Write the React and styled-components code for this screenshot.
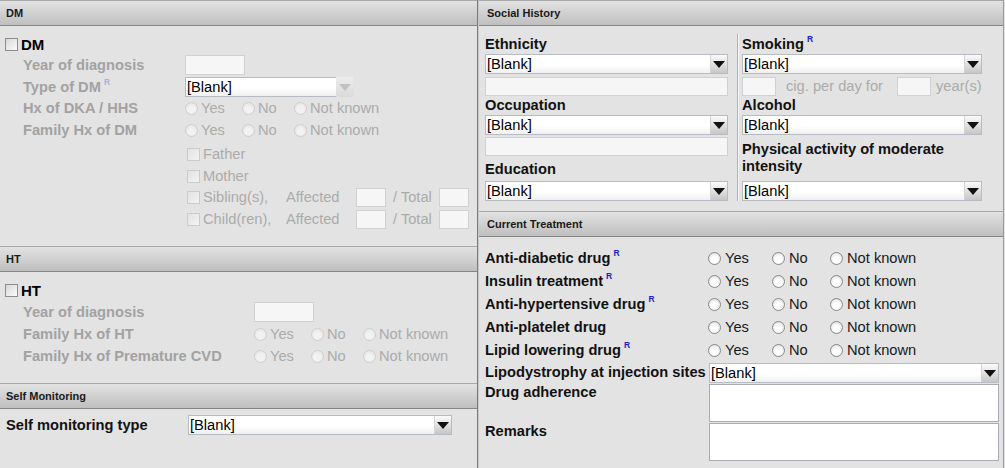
import React from "react";
import styled, { createGlobalStyle, css } from "styled-components";

const GlobalStyle = createGlobalStyle`
  html, body { margin: 0; padding: 0; background: #e3e3e3; }
  body { font-family: "Liberation Sans", Arial, sans-serif; font-size: 14.67px; color: #111; }
  * { box-sizing: border-box; }
`;

const Page = styled.div`
  display: flex;
  width: 1005px;
  height: 468px;
  overflow: hidden;
  background: #e3e3e3;
`;

const LeftCol = styled.div`
  width: 478px;
  flex: none;
  display: flex;
  flex-direction: column;
  border-right: 1px solid #7a7a7a;
`;

const RightCol = styled.div`
  flex: 1;
  display: flex;
  flex-direction: column;
  border-left: 1px solid #c9c9c9;
  border-right: 1px solid #9a9a9a;
  margin-right: 1px;
`;

const SectionHeader = styled.div`
  height: 26px;
  flex: none;
  display: flex;
  align-items: center;
  padding-left: ${(p) => p.$pad || 6}px;
  font-size: 11px;
  font-weight: bold;
  color: #1a1a1a;
  background: linear-gradient(#e2e2e2, #bfbfbf);
  border-top: 1px solid #a8a8a8;
  border-bottom: 1px solid #868686;
`;

const SectionBody = styled.div`
  padding: ${(p) => p.$pt || 0}px ${(p) => p.$pr || 0}px ${(p) => p.$pb || 0}px ${(p) => p.$pl || 0}px;
  display: flex;
  flex-direction: column;
  flex: ${(p) => (p.$grow ? 1 : "none")};
`;

const FieldRow = styled.div`
  display: grid;
  grid-template-columns: ${(p) => p.$label}px 1fr;
  align-items: ${(p) => p.$align || "center"};
  height: ${(p) => p.$h || 22}px;
  padding-left: ${(p) => p.$indent || 0}px;
  margin-top: ${(p) => p.$mt || 0}px;
`;

const Label = styled.span`
  font-weight: bold;
  white-space: nowrap;
  color: ${(p) => (p.$disabled ? "#a2a2a2" : "#111")};
  line-height: 17px;
`;

const Sup = styled.sup`
  font-size: 8.5px;
  font-weight: bold;
  line-height: 0;
  margin-left: 3px;
  vertical-align: 7px;
  color: ${(p) => (p.$disabled ? "#aab0d8" : "#1c1ccc")};
`;

const CheckRow = styled.div`
  display: flex;
  align-items: center;
  gap: 3px;
  height: ${(p) => p.$h || 20}px;
  padding-left: 5px;
`;

const CheckBox = styled.span`
  width: 13px;
  height: 13px;
  flex: none;
  border: 1px solid ${(p) => (p.$disabled ? "#cbcbcb" : "#8e8e8e")};
  background: ${(p) =>
    p.$disabled ? "linear-gradient(135deg, #e2e2e2, #f3f3f3)" : "linear-gradient(135deg, #d6d6d6, #fdfdfd)"};
`;

const BigCheckLabel = styled.span`
  font-weight: bold;
  font-size: 15px;
  color: #000;
`;

const OptText = styled.span`
  color: ${(p) => (p.$disabled ? "#ababab" : "#1a1a1a")};
  white-space: nowrap;
  line-height: 17px;
`;

const CheckOption = styled.span`
  display: inline-flex;
  align-items: center;
  gap: 3px;
  width: ${(p) => (p.$w ? `${p.$w}px` : "auto")};
  flex: none;
  margin-left: ${(p) => p.$ml || 0}px;
`;

const Options = styled.div`
  display: flex;
  align-items: center;
`;

const RadioCircle = styled.span`
  width: 13px;
  height: 13px;
  flex: none;
  border-radius: 50%;
  border: 1px solid ${(p) => (p.$disabled ? "#cfcfcf" : "#8a8a8a")};
  background: ${(p) =>
    p.$disabled
      ? "radial-gradient(circle at 50% 60%, #f2f2f2 35%, #e0e0e0 100%)"
      : "radial-gradient(circle at 50% 60%, #ffffff 35%, #d2d2d2 100%)"};
`;

const RadioOption = styled.span`
  display: inline-flex;
  align-items: center;
  gap: ${(p) => (p.$disabled ? 3 : 4)}px;
  width: ${(p) => (p.$w ? `${p.$w}px` : "auto")};
  flex: none;
`;

const SelectBox = styled.div`
  display: flex;
  width: ${(p) => p.$w}px;
  height: 20px;
  flex: none;
  border: 1px solid #b7bcc3;
  background: linear-gradient(#ffffff 55%, #f0f0f0);
`;

const SelectText = styled.span`
  flex: 1;
  padding-left: 1px;
  line-height: 18px;
  color: #000;
  white-space: nowrap;
  overflow: hidden;
`;

const SelectArrow = styled.span`
  width: 17px;
  flex: none;
  display: flex;
  align-items: center;
  justify-content: center;
  background: ${(p) =>
    p.$disabled ? "linear-gradient(#ececec, #dadada)" : "linear-gradient(#fbfbfb, #c6c6c6)"};
  border-left: 1px solid ${(p) => (p.$disabled ? "#e4e4e4" : "#d4d4d4")};
  ${(p) =>
    p.$disabled &&
    css`
      margin: -1px -1px -1px 0;
      border-left: none;
    `}
  &::after {
    content: "";
    border-left: 6px solid transparent;
    border-right: 6px solid transparent;
    border-top: 7px solid ${(p) => (p.$disabled ? "#c2c2c2" : "#111")};
    margin-top: 1px;
  }
`;

const TextBox = styled.div`
  width: ${(p) => (p.$w ? `${p.$w}px` : "100%")};
  height: ${(p) => p.$h || 20}px;
  flex: none;
  margin-top: ${(p) => p.$mt || 0}px;
  margin-left: ${(p) => p.$ml || 0}px;
  border: 1px solid ${(p) => (p.$dim ? "#cfd1d4" : "#a9adb3")};
  background: ${(p) => (p.$dim ? "#f6f6f6" : "#ffffff")};
`;

const SocialGrid = styled.div`
  display: grid;
  grid-template-columns: 243px 1fr;
  column-gap: 9px;
  padding: 8px 0 10px 6px;
`;

const SubCol = styled.div`
  display: flex;
  flex-direction: column;
  ${(p) =>
    p.$divided &&
    css`
      border-left: 1px solid #a6b4c9;
      box-shadow: inset 1px 0 0 #f4f6fa;
      padding-left: 4px;
      width: 249px;
    `}
`;

const StackLabel = styled.div`
  font-weight: bold;
  color: #111;
  height: ${(p) => p.$h}px;
  line-height: ${(p) => p.$lh || 17}px;
  padding-top: ${(p) => p.$pt || 0}px;
  flex: none;
`;

const InlineRow = styled.div`
  display: flex;
  align-items: center;
  height: 19px;
  margin-top: 3px;
  flex: none;
`;

const Select = ({ w, disabled }) => (
  <SelectBox $w={w}>
    <SelectText>[Blank]</SelectText>
    <SelectArrow $disabled={disabled} />
  </SelectBox>
);

const RadioSet = ({ disabled, widths }) => (
  <Options>
    <RadioOption $w={widths[0]} $disabled={disabled}>
      <RadioCircle $disabled={disabled} />
      <OptText $disabled={disabled}>Yes</OptText>
    </RadioOption>
    <RadioOption $w={widths[1]} $disabled={disabled}>
      <RadioCircle $disabled={disabled} />
      <OptText $disabled={disabled}>No</OptText>
    </RadioOption>
    <RadioOption $disabled={disabled}>
      <RadioCircle $disabled={disabled} />
      <OptText $disabled={disabled}>Not known</OptText>
    </RadioOption>
  </Options>
);

const treatments = [
  { label: "Anti-diabetic drug", r: true },
  { label: "Insulin treatment", r: true },
  { label: "Anti-hypertensive drug", r: true },
  { label: "Anti-platelet drug", r: false },
  { label: "Lipid lowering drug", r: true },
];

const LEFT_RADIO = [57, 52];
const RIGHT_RADIO = [64, 58];

export default function App() {
  return (
    <>
      <GlobalStyle />
      <Page>
        <LeftCol>
          <SectionHeader>DM</SectionHeader>
          <SectionBody $pt={8} $pb={16}>
            <CheckRow $h={20}>
              <CheckBox />
              <BigCheckLabel>DM</BigCheckLabel>
            </CheckRow>
            <FieldRow $label={162} $indent={23}>
              <Label $disabled>Year of diagnosis</Label>
              <TextBox $w={60} $dim />
            </FieldRow>
            <FieldRow $label={162} $indent={23}>
              <Label $disabled>
                Type of DM<Sup $disabled>R</Sup>
              </Label>
              <Options>
                <SelectBox $w={168}>
                  <SelectText>[Blank]</SelectText>
                  <SelectArrow $disabled />
                </SelectBox>
              </Options>
            </FieldRow>
            <FieldRow $label={162} $indent={23} $h={21}>
              <Label $disabled>Hx of DKA / HHS</Label>
              <RadioSet disabled widths={LEFT_RADIO} />
            </FieldRow>
            <FieldRow $label={162} $indent={23}>
              <Label $disabled>Family Hx of DM</Label>
              <RadioSet disabled widths={LEFT_RADIO} />
            </FieldRow>
            <FieldRow $label={164} $indent={23} $mt={2}>
              <span />
              <CheckOption>
                <CheckBox $disabled />
                <OptText $disabled>Father</OptText>
              </CheckOption>
            </FieldRow>
            <FieldRow $label={164} $indent={23}>
              <span />
              <CheckOption>
                <CheckBox $disabled />
                <OptText $disabled>Mother</OptText>
              </CheckOption>
            </FieldRow>
            <FieldRow $label={164} $indent={23} $h={21}>
              <span />
              <Options>
                <CheckOption $w={99}>
                  <CheckBox $disabled />
                  <OptText $disabled>Sibling(s),</OptText>
                </CheckOption>
                <CheckOption $w={70}>
                  <OptText $disabled>Affected</OptText>
                </CheckOption>
                <TextBox $w={30} $h={19} $dim />
                <CheckOption $w={46} $ml={7}>
                  <OptText $disabled>/ Total</OptText>
                </CheckOption>
                <TextBox $w={30} $h={19} $dim />
              </Options>
            </FieldRow>
            <FieldRow $label={164} $indent={23}>
              <span />
              <Options>
                <CheckOption $w={99}>
                  <CheckBox $disabled />
                  <OptText $disabled>Child(ren),</OptText>
                </CheckOption>
                <CheckOption $w={70}>
                  <OptText $disabled>Affected</OptText>
                </CheckOption>
                <TextBox $w={30} $h={19} $dim />
                <CheckOption $w={46} $ml={7}>
                  <OptText $disabled>/ Total</OptText>
                </CheckOption>
                <TextBox $w={30} $h={19} $dim />
              </Options>
            </FieldRow>
          </SectionBody>

          <SectionHeader>HT</SectionHeader>
          <SectionBody $pt={7} $pb={15}>
            <CheckRow $h={22}>
              <CheckBox />
              <BigCheckLabel>HT</BigCheckLabel>
            </CheckRow>
            <FieldRow $label={231} $indent={23}>
              <Label $disabled>Year of diagnosis</Label>
              <TextBox $w={60} $dim />
            </FieldRow>
            <FieldRow $label={231} $indent={23}>
              <Label $disabled>Family Hx of HT</Label>
              <RadioSet disabled widths={LEFT_RADIO} />
            </FieldRow>
            <FieldRow $label={231} $indent={23} $h={23}>
              <Label $disabled>Family Hx of Premature CVD</Label>
              <RadioSet disabled widths={LEFT_RADIO} />
            </FieldRow>
          </SectionBody>

          <SectionHeader>Self Monitoring</SectionHeader>
          <SectionBody $pt={6} $grow>
            <FieldRow $label={182} $indent={6} $h={20}>
              <Label>Self monitoring type</Label>
              <Select w={264} />
            </FieldRow>
          </SectionBody>
        </LeftCol>

        <RightCol>
          <SectionHeader $pad={8}>Social History</SectionHeader>
          <SocialGrid>
            <SubCol>
              <StackLabel $h={20} $lh={20}>Ethnicity</StackLabel>
              <Select w={243} />
              <TextBox $h={19} $mt={3} $dim />
              <StackLabel $h={19} $lh={19}>Occupation</StackLabel>
              <Select w={243} />
              <TextBox $h={19} $mt={2} $dim />
              <StackLabel $h={25} $pt={5}>Education</StackLabel>
              <Select w={243} />
            </SubCol>
            <SubCol $divided>
              <StackLabel $h={20} $lh={20}>
                Smoking<Sup>R</Sup>
              </StackLabel>
              <Select w={240} />
              <InlineRow>
                <TextBox $w={34} $h={19} $dim />
                <CheckOption $w={111} $ml={10}>
                  <OptText $disabled>cig. per day for</OptText>
                </CheckOption>
                <TextBox $w={34} $h={19} $dim />
                <CheckOption $ml={5}>
                  <OptText $disabled>year(s)</OptText>
                </CheckOption>
              </InlineRow>
              <StackLabel $h={19} $lh={19}>Alcohol</StackLabel>
              <Select w={240} />
              <StackLabel $h={46} $pt={6}>
                Physical activity of moderate intensity
              </StackLabel>
              <Select w={240} />
            </SubCol>
          </SocialGrid>

          <SectionHeader $pad={8}>Current Treatment</SectionHeader>
          <SectionBody $pt={10} $pl={6} $grow>
            {treatments.map((t) => (
              <FieldRow key={t.label} $label={223} $h={23}>
                <Label>
                  {t.label}
                  {t.r && <Sup>R</Sup>}
                </Label>
                <RadioSet widths={RIGHT_RADIO} />
              </FieldRow>
            ))}
            <FieldRow $label={224} $h={21}>
              <Label>Lipodystrophy at injection sites</Label>
              <Select w={290} />
            </FieldRow>
            <FieldRow $label={224} $h={38} $mt={1} $align="start">
              <Label>Drug adherence</Label>
              <TextBox $w={290} $h={38} />
            </FieldRow>
            <FieldRow $label={224} $h={38} $mt={1} $align="start">
              <Label>Remarks</Label>
              <TextBox $w={290} $h={38} />
            </FieldRow>
          </SectionBody>
        </RightCol>
      </Page>
    </>
  );
}
